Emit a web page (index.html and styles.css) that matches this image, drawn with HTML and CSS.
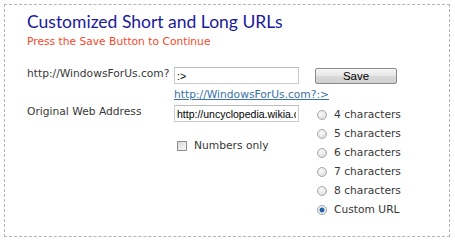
FILE: index.html
```html
<!DOCTYPE html>
<html>
<head>
<meta charset="utf-8">
<link rel="stylesheet" href="styles.css">
</head>
<body>
<div class="box">
  <h1 class="title">Customized Short and Long URLs</h1>
  <p class="subtitle">Press the Save Button to Continue</p>
  <div class="form">
    <label class="label">http://WindowsForUs.com?</label>
    <div class="field"><input class="text" type="text" value=":>"></div>
    <div class="btncell"><button class="save">Save</button></div>

    <div class="spacer"></div>
    <a class="link" href="#">http://WindowsForUs.com?:&gt;</a>
    <div class="spacer"></div>

    <label class="label">Original Web Address</label>
    <div class="field col">
      <input class="text" type="text" value="http://uncyclopedia.wikia.com/wiki/Main_Page">
      <label class="check"><span class="cbox"></span>Numbers only</label>
    </div>
    <ul class="radios">
      <li><span class="radio"></span>4 characters</li>
      <li><span class="radio"></span>5 characters</li>
      <li><span class="radio"></span>6 characters</li>
      <li><span class="radio"></span>7 characters</li>
      <li><span class="radio"></span>8 characters</li>
      <li><span class="radio on"></span>Custom URL</li>
    </ul>
  </div>
</div>
</body>
</html>
```

FILE: styles.css
```css
html, body { margin: 0; padding: 0; background: #fff; }
body { padding: 4px; width: 455px; height: 243px; box-sizing: border-box; overflow: hidden; }
.box {
  width: 446px; height: 233px; box-sizing: border-box;
  border: 1px dashed #b4b4b4;
  padding: 7px 0 0 22px;
  font-family: "DejaVu Sans", Verdana, sans-serif;
  font-size: 10.7px; color: #383838;
}
.title {
  margin: 0; font-family: Lato, "Open Sans", sans-serif; font-weight: normal;
  font-size: 17.5px; line-height: 19px; color: #1a1a9c;
}
.subtitle { margin: 4px 0 0; color: #f8482a; line-height: 14px; }
.form {
  display: grid;
  grid-template-columns: 147px 141px 90px;
  margin-top: 18px;
}
.label { line-height: 13px; }
.text {
  display: block; width: 125px; height: 17px; box-sizing: border-box; margin: 0;
  border: 1px solid #cbcbcb; border-top-color: #bcbcbc; padding: 0 2px;
  font-family: "Liberation Sans", Arial, sans-serif; font-size: 10.5px; color: #000;
  background: #fff; outline: none;
}
.btncell { padding-top: 1px; }
.save {
  display: block;
  width: 82px; height: 16px; padding: 0; margin: 0;
  border: 1px solid #8a8a8a; border-radius: 2px;
  background: linear-gradient(#f6f6f6, #e6e6e6 50%, #d9d9d9 51%, #d0d0d0);
  font-family: "Liberation Sans", Arial, sans-serif; font-size: 11.5px; color: #000;
  line-height: 14px;
}
.link {
  color: #3a72a8; text-decoration: underline; line-height: 14px;
  margin-top: 4px; margin-bottom: 3px; white-space: nowrap;
}
.col { display: flex; flex-direction: column; }
.check { display: flex; align-items: center; margin-top: 18px; margin-left: 3px; line-height: 12px; }
.cbox {
  width: 8px; height: 8px; border: 1px solid #8f8f8f; margin-right: 7px;
  background: linear-gradient(135deg, #d8d8d8, #f8f8f8);
}
.radios { list-style: none; margin: 0; padding: 0 0 0 2px; }
.radios li { display: flex; align-items: center; height: 19px; }
.radio {
  width: 10px; height: 10px; border-radius: 50%; margin-right: 7px; box-sizing: border-box;
  border: 1px solid #a9a9a9;
  background: radial-gradient(circle at 40% 35%, #fafafa, #d6d6d6);
}
.radio.on { background: radial-gradient(circle, #1c5b9a 0, #2e70b4 2.2px, #f2f2f2 2.8px, #dadada); }
```
